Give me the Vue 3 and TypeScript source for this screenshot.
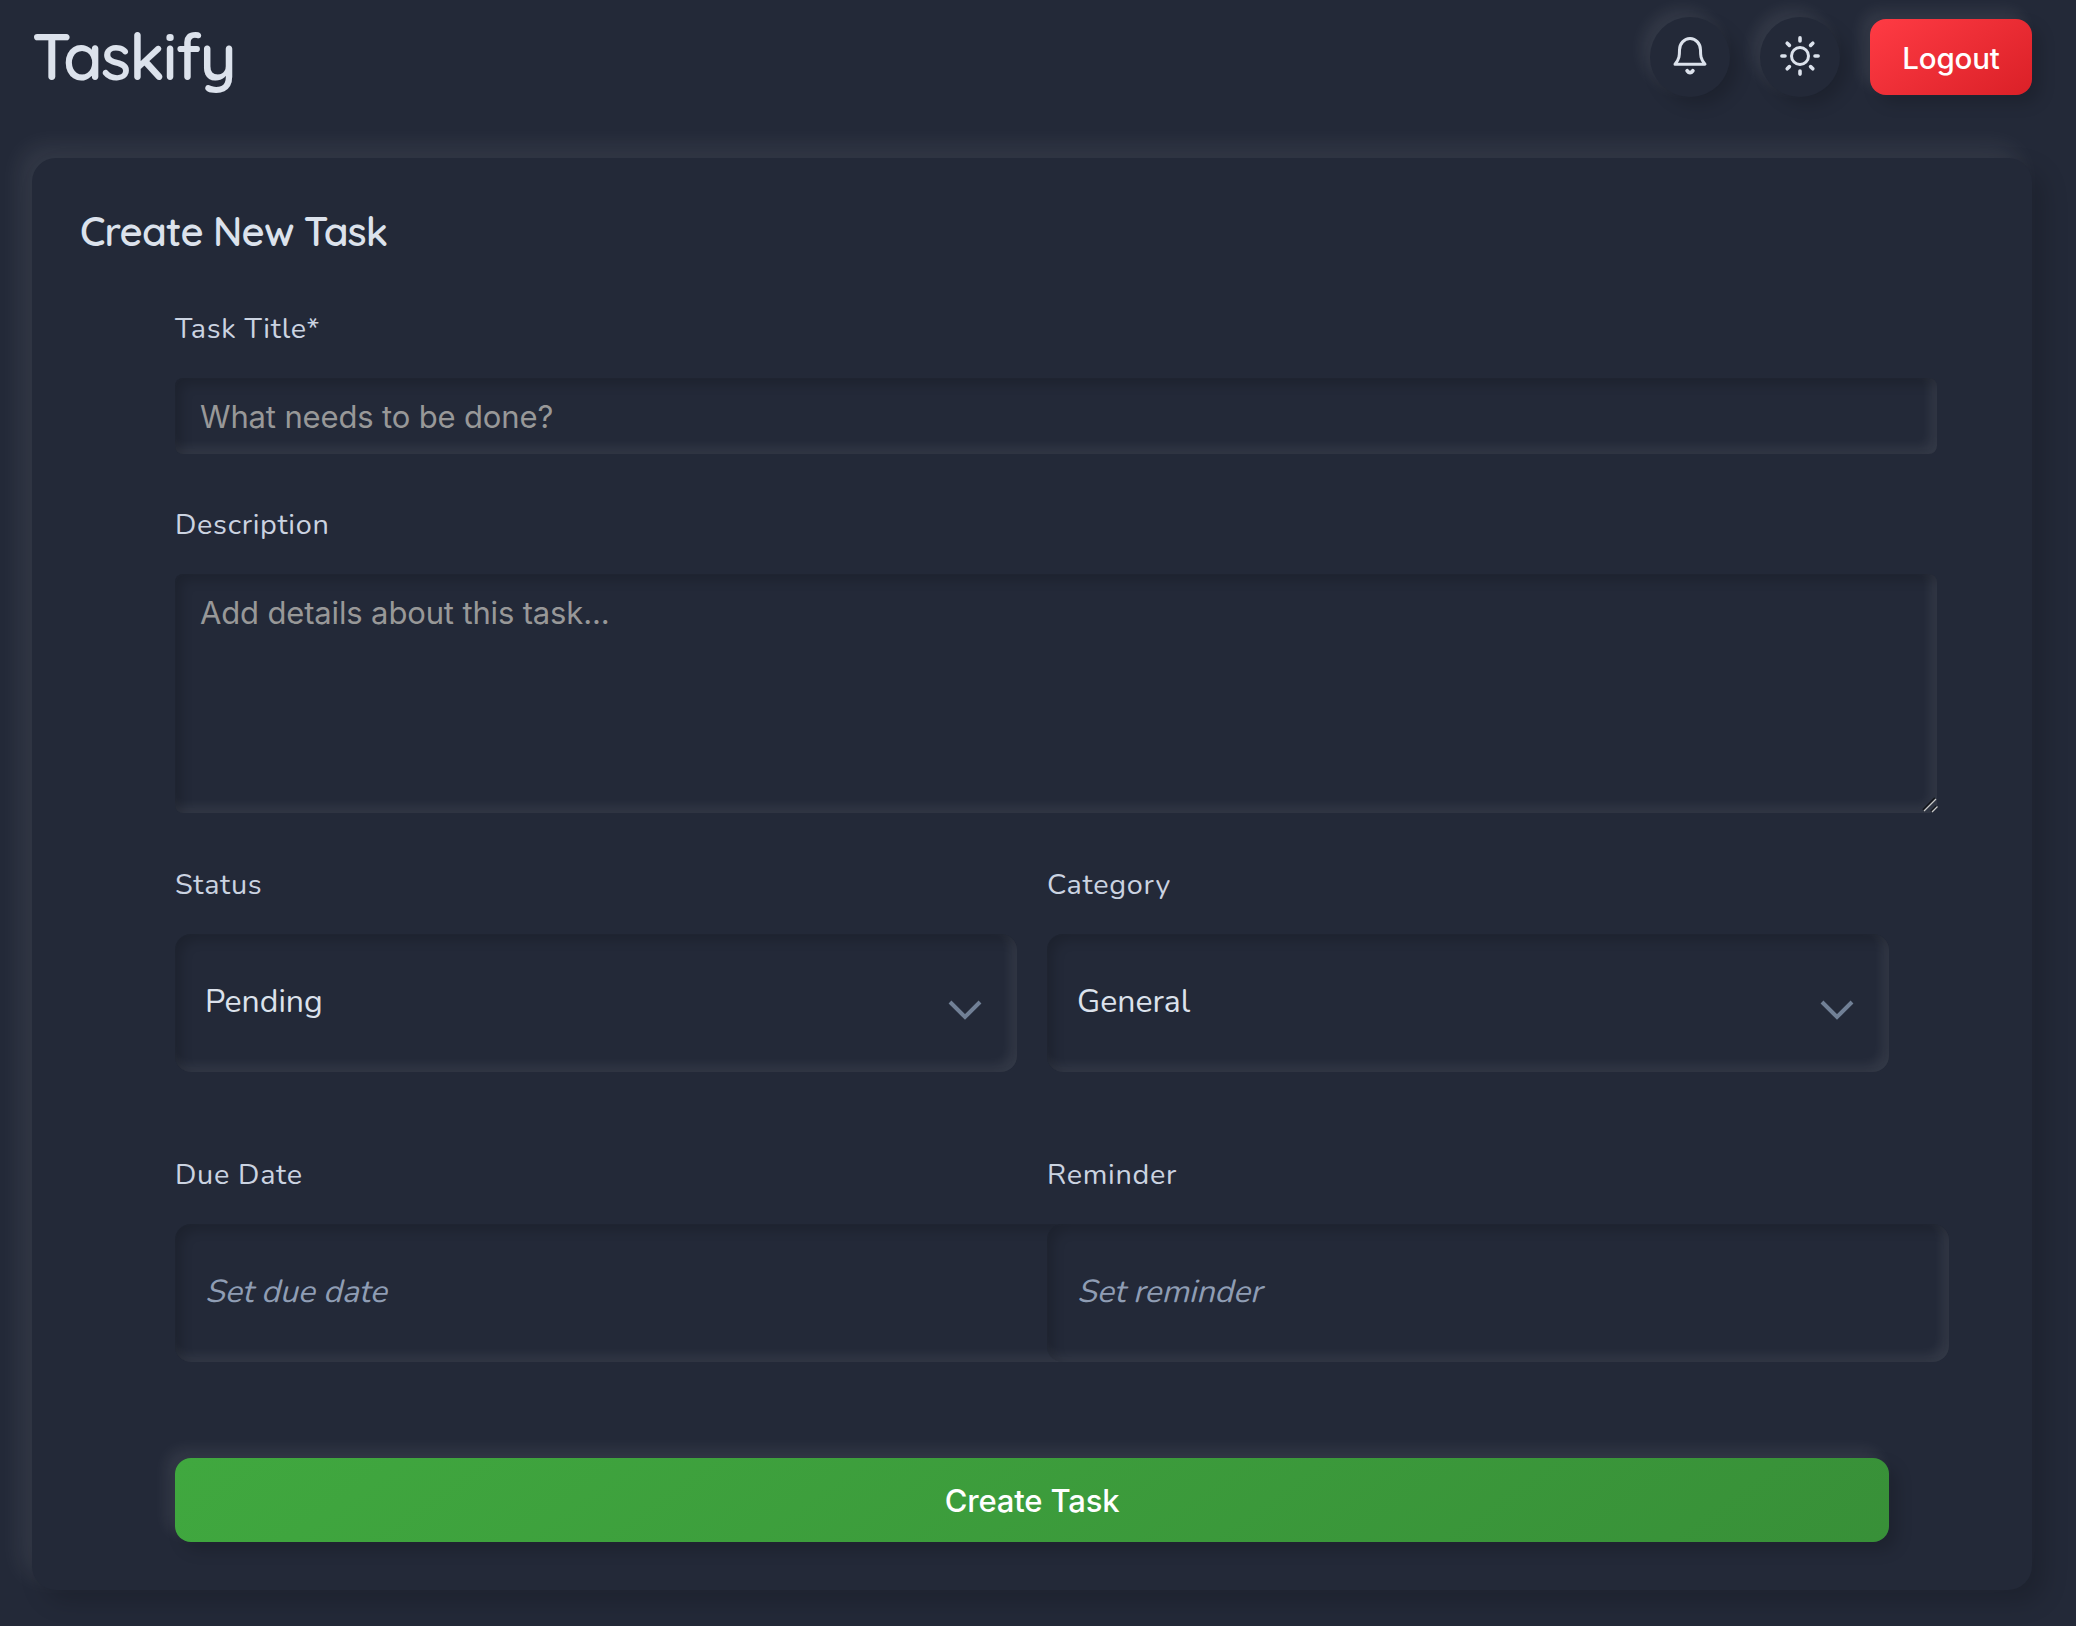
<script setup lang="ts">
const rays: number[] = [0, 45, 90, 135, 180, 225, 270, 315]

const selects = [
  { label: 'Status', value: 'Pending' },
  { label: 'Category', value: 'General' },
]

const dates = [
  { label: 'Due Date', hint: 'Set due date' },
  { label: 'Reminder', hint: 'Set reminder' },
]
</script>

<template>
  <div class="page">
    <header class="topbar">
      <h1 class="logo">Taskify</h1>
      <div class="actions">
        <button class="round" aria-label="Notifications">
          <svg width="80" height="80" viewBox="0 0 80 80" fill="none" stroke="currentColor" stroke-width="3" stroke-linecap="round" stroke-linejoin="round">
            <path d="M25 47.2 C29.5 42 29.5 38 29.5 33 A10.5 11.5 0 0 1 50.5 33 C50.5 38 50.5 42 55 47.2 Z" />
            <path stroke-width="3.8" d="M37.2 53.8 Q40 57.4 42.8 53.8" />
          </svg>
        </button>
        <button class="round" aria-label="Theme">
          <svg width="80" height="80" viewBox="0 0 80 80" fill="none" stroke="currentColor" stroke-width="3" stroke-linecap="round">
            <circle cx="40" cy="39" r="8.5" />
            <path v-for="a in rays" :key="a" stroke-width="3.6" d="M40 20.9V24" :transform="`rotate(${a} 40 39)`" />
          </svg>
        </button>
        <button class="logout">Logout</button>
      </div>
    </header>

    <main class="card">
      <h2 class="heading">Create New Task</h2>
      <form class="form" @submit.prevent>
        <div class="group">
          <label class="label">Task Title*</label>
          <input class="input" placeholder="What needs to be done?" />
        </div>
        <div class="group">
          <label class="label">Description</label>
          <div class="area-wrap">
            <textarea class="input area" placeholder="Add details about this task..."></textarea>
            <svg class="grip" width="16" height="16" viewBox="0 0 16 16" fill="none">
              <path d="M1 13L13 1M9 14.5L14.5 9" stroke="#14171d" stroke-width="2" />
              <path d="M2 14L14 2M10 15L15.5 9.5" stroke="#c9c9c9" stroke-width="1.3" />
            </svg>
          </div>
        </div>
        <div class="row selects">
          <div v-for="s in selects" :key="s.label" class="group">
            <label class="label">{{ s.label }}</label>
            <div class="box">
              <span>{{ s.value }}</span>
              <svg class="chev" width="34" height="22" viewBox="0 0 34 22" fill="none">
                <path d="M2 2L17 17L32 2" stroke="#718096" stroke-width="4" />
              </svg>
            </div>
          </div>
        </div>
        <div class="row dates">
          <div v-for="d in dates" :key="d.label" class="group">
            <label class="label">{{ d.label }}</label>
            <div class="box wide"><span class="hint">{{ d.hint }}</span></div>
          </div>
        </div>
        <button class="submit">Create Task</button>
      </form>
    </main>
  </div>
</template>

<style>
body { background: #232938; }
</style>

<style scoped>
.page {
  box-sizing: border-box;
  height: 1626px;
  padding: 17px 44px 0 32px;
  overflow: hidden;
  background: #232938;
  color: #dce2ec;
  font-family: Inter, "Liberation Sans", sans-serif;
}
button, input, textarea { font-family: inherit; border: 0; margin: 0; outline: 0; color: inherit; }
.topbar { display: flex; justify-content: space-between; align-items: center; height: 80px; }
.logo {
  margin: 0; padding-bottom: 2px; font-family: Quicksand, Inter, sans-serif; font-size: 64px; line-height: 78px;
  font-weight: 600; letter-spacing: -2.1px;
}
.actions { display: flex; align-items: center; gap: 30px; }
.round {
  width: 80px; height: 80px; padding: 0; border-radius: 50%; background: #232938;
  box-shadow: 8px 8px 16px rgba(0, 0, 0, 0.17), -8px -8px 16px rgba(255, 255, 255, 0.08);
}
.round svg { display: block; }
.logout {
  width: 162px; height: 76px; padding: 2px 0 0; border-radius: 16px; color: #fff;
  font-size: 29.5px; font-weight: 500; letter-spacing: -0.15px;
  background: linear-gradient(145deg, #ff3b44, #da2027);
  box-shadow: 8px 8px 16px rgba(0, 0, 0, 0.17), -8px -8px 16px rgba(255, 255, 255, 0.08);
}
.card {
  box-sizing: border-box; height: 1432px; margin-top: 61px; padding: 48px; border-radius: 24px;
  background: #232938;
  box-shadow: 12px 12px 24px rgba(0, 0, 0, 0.17), -12px -12px 24px rgba(255, 255, 255, 0.08);
}
.heading {
  margin: 0; font-family: Quicksand, Inter, sans-serif; font-size: 40px; line-height: 50px;
  font-weight: 600; letter-spacing: -0.88px;
}
.form { margin-top: 51px; padding: 0 95px; display: flex; flex-direction: column; }
.group { display: flex; flex-direction: column; gap: 28px; }
.group + .group { margin-top: 49px; }
.label {
  font-family: Nunito, Lato, sans-serif; font-size: 28.8px; line-height: 43px;
  color: #cbd3e1; letter-spacing: 0.7px;
}
.input {
  box-sizing: border-box; display: block; width: calc(100% + 48px); height: 76px; padding: 0 25px;
  border-radius: 8px; background: #232938; font-size: 31px; letter-spacing: -0.15px;
  box-shadow: inset 6px 6px 12px rgba(0, 0, 0, 0.17), inset -6px -6px 12px rgba(255, 255, 255, 0.08);
}
.input::placeholder { color: #989898; opacity: 1; }
.area-wrap { position: relative; }
.area { height: 239px; padding-top: 20px; line-height: 38px; resize: none; }
.grip { position: absolute; right: -49px; bottom: 0; }
.row { display: flex; gap: 30px; }
.row .group { flex: 1 1 0; min-width: 0; margin-top: 0; }
.selects { margin-top: 50px; }
.dates { margin-top: 81px; }
.box {
  box-sizing: border-box; height: 138px; padding: 0 35px 3px 30px; border-radius: 16px; background: #232938;
  display: flex; align-items: center; justify-content: space-between;
  font-family: Nunito, Lato, sans-serif; font-size: 32px;
  box-shadow: inset 6px 6px 12px rgba(0, 0, 0, 0.17), inset -6px -6px 12px rgba(255, 255, 255, 0.08);
}
.wide { width: 902px; }
.chev { margin-top: 19px; }
.hint { color: #8f9db4; transform: skewX(-14deg); transform-origin: 0 74%; }
.submit {
  height: 84px; margin-top: 96px; padding: 0; border-radius: 16px; color: #fff;
  font-size: 31px; font-weight: 500; letter-spacing: -0.18px;
  background: linear-gradient(145deg, #40a83f, #389038);
  box-shadow: 8px 8px 16px rgba(0, 0, 0, 0.17), -8px -8px 16px rgba(255, 255, 255, 0.08);
}
</style>
